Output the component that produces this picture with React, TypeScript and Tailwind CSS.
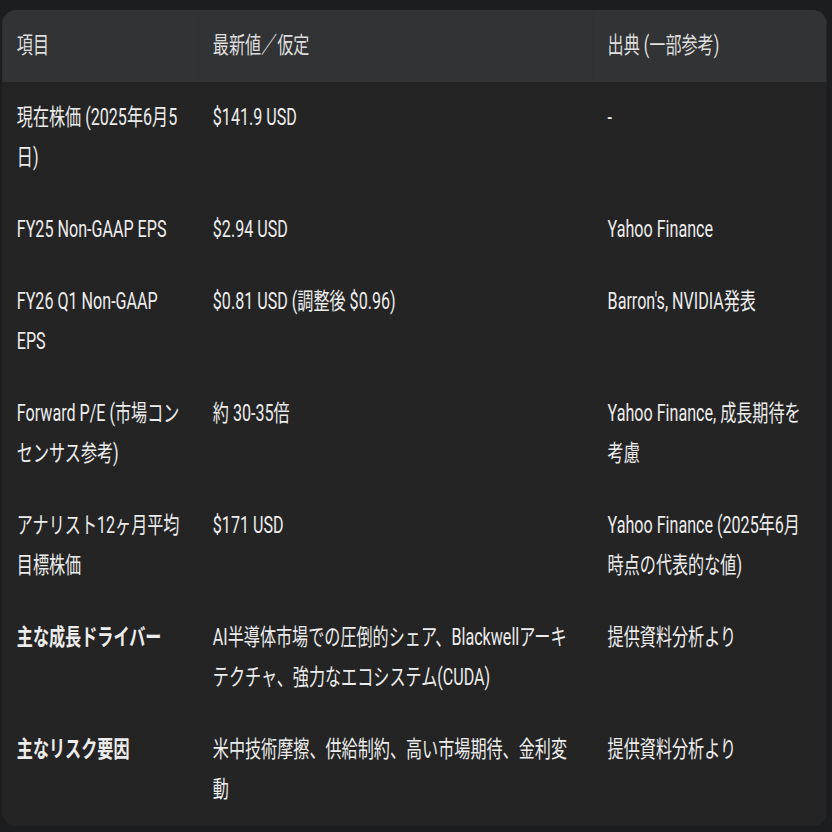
import React from "react";

type Row = { a: string; b: string; c: string; bold?: boolean };

const rows: Row[] = [
  { a: "現在株価 (2025年6月5日)", b: "$141.9 USD", c: "-" },
  { a: "FY25 Non-GAAP EPS", b: "$2.94 USD", c: "Yahoo Finance" },
  { a: "FY26 Q1 Non-GAAP EPS", b: "$0.81 USD (調整後 $0.96)", c: "Barron's, NVIDIA発表" },
  { a: "Forward P/E (市場コンセンサス参考)", b: "約 30-35倍", c: "Yahoo Finance, 成長期待を考慮" },
  { a: "アナリスト12ヶ月平均目標株価", b: "$171 USD", c: "Yahoo Finance (2025年6月時点の代表的な値)" },
  {
    a: "主な成長ドライバー",
    b: "AI半導体市場での圧倒的シェア、Blackwellアーキテクチャ、強力なエコシステム(CUDA)",
    c: "提供資料分析より",
    bold: true,
  },
  {
    a: "主なリスク要因",
    b: "米中技術摩擦、供給制約、高い市場期待、金利変動",
    c: "提供資料分析より",
    bold: true,
  },
];

export default function App() {
  return (
    <div
      className="w-[832px] h-[832px] overflow-hidden bg-[#1c1d1f]"
      style={{ fontFamily: "Roboto, 'Noto Sans CJK JP', sans-serif" }}
    >
      <div className="w-[1189px] origin-top-left scale-x-[0.7] pt-[10px] pl-[3px]">
        <div className="w-[1178px] overflow-hidden rounded-[20px_/_14px] bg-[#242424]">
          <table className="w-full table-fixed border-collapse text-[23px] leading-[40px]">
            <colgroup>
              <col className="w-[280px]" />
              <col className="w-[564px]" />
              <col />
            </colgroup>
            <thead>
              <tr className="bg-[#323335] text-[#dedede]">
                <th className="px-[21px] py-4 text-left font-normal align-top">項目</th>
                <th className="px-[21px] py-4 text-left font-normal align-top">最新値／仮定</th>
                <th className="px-[21px] py-4 text-left font-normal align-top">出典 (一部参考)</th>
              </tr>
            </thead>
            <tbody className="text-[#ececec]">
              {rows.map((r, i) => (
                <tr key={i}>
                  <td className={`px-[21px] py-4 align-top ${r.bold ? "font-bold" : ""}`}>{r.a}</td>
                  <td className="px-[21px] py-4 align-top">{r.b}</td>
                  <td className="px-[21px] py-4 align-top">{r.c}</td>
                </tr>
              ))}
            </tbody>
          </table>
        </div>
      </div>
    </div>
  );
}
